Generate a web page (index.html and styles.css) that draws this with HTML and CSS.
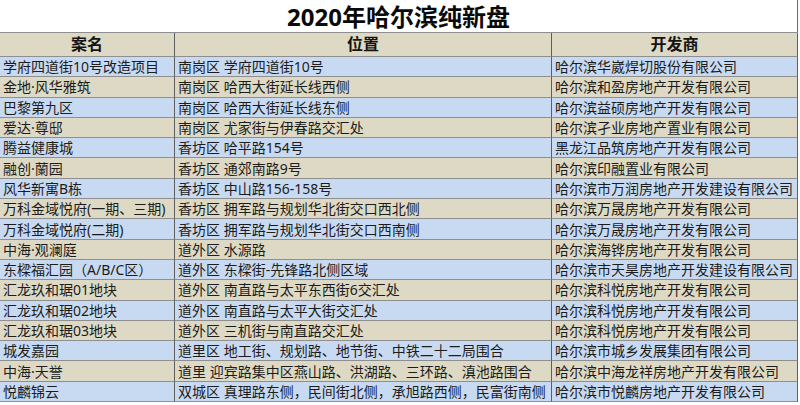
FILE: index.html
```html
<!DOCTYPE html>
<html lang="zh-CN">
<head>
<meta charset="utf-8">
<title>2020年哈尔滨纯新盘</title>
<link rel="stylesheet" href="styles.css">
</head>
<body>
<div class="page">
  <h1 class="title">2020年哈尔滨纯新盘</h1>
  <div class="sheet">
    <div class="cell head">案名</div><div class="cell head">位置</div><div class="cell head">开发商</div>

    <div class="cell blue">学府四道街10号改造项目</div><div class="cell blue">南岗区 学府四道街10号</div><div class="cell blue">哈尔滨华崴焊切股份有限公司</div>
    <div class="cell tan">金地·风华雅筑</div><div class="cell tan">南岗区 哈西大街延长线西侧</div><div class="cell tan">哈尔滨和盈房地产开发有限公司</div>
    <div class="cell blue">巴黎第九区</div><div class="cell blue">南岗区 哈西大街延长线东侧</div><div class="cell blue">哈尔滨益硕房地产开发有限公司</div>
    <div class="cell tan">爱达·尊邸</div><div class="cell tan">南岗区 尤家街与伊春路交汇处</div><div class="cell tan">哈尔滨孑业房地产置业有限公司</div>
    <div class="cell blue">腾益健康城</div><div class="cell blue">香坊区 哈平路154号</div><div class="cell blue">黑龙江品筑房地产开发有限公司</div>
    <div class="cell tan">融创·蘭园</div><div class="cell tan">香坊区 通郊南路9号</div><div class="cell tan">哈尔滨印融置业有限公司</div>
    <div class="cell blue">风华新寓B栋</div><div class="cell blue">香坊区 中山路156-158号</div><div class="cell blue">哈尔滨市万润房地产开发建设有限公司</div>
    <div class="cell tan">万科金域悦府(一期、三期)</div><div class="cell tan">香坊区 拥军路与规划华北街交口西北侧</div><div class="cell tan">哈尔滨万晟房地产开发有限公司</div>
    <div class="cell blue">万科金域悦府(二期)</div><div class="cell blue">香坊区 拥军路与规划华北街交口西南侧</div><div class="cell blue">哈尔滨万晟房地产开发有限公司</div>
    <div class="cell tan">中海·观澜庭</div><div class="cell tan">道外区 水源路</div><div class="cell tan">哈尔滨海铧房地产开发有限公司</div>
    <div class="cell blue">东樑福汇园（A/B/C区）</div><div class="cell blue">道外区 东樑街-先锋路北侧区域</div><div class="cell blue">哈尔滨市天昊房地产开发建设有限公司</div>
    <div class="cell tan">汇龙玖和琚01地块</div><div class="cell tan">道外区 南直路与太平东西街6交汇处</div><div class="cell tan">哈尔滨科悦房地产开发有限公司</div>
    <div class="cell blue">汇龙玖和琚02地块</div><div class="cell blue">道外区 南直路与太平大街交汇处</div><div class="cell blue">哈尔滨科悦房地产开发有限公司</div>
    <div class="cell tan">汇龙玖和琚03地块</div><div class="cell tan">道外区 三机街与南直路交汇处</div><div class="cell tan">哈尔滨科悦房地产开发有限公司</div>
    <div class="cell blue">城发嘉园</div><div class="cell blue">道里区 地工街、规划路、地节街、中铁二十二局围合</div><div class="cell blue">哈尔滨市城乡发展集团有限公司</div>
    <div class="cell tan">中海·天誉</div><div class="cell tan">道里 迎宾路集中区燕山路、洪湖路、三环路、滇池路围合</div><div class="cell tan">哈尔滨中海龙祥房地产开发有限公司</div>
    <div class="cell blue">悦麟锦云</div><div class="cell blue">双城区 真理路东侧，民间街北侧，承旭路西侧，民富街南侧</div><div class="cell blue">哈尔滨市悦麟房地产开发有限公司</div>
  </div>
</div>
</body>
</html>
```

FILE: styles.css
```css
html, body {
  margin: 0;
  padding: 0;
  background: #ffffff;
}

.page {
  width: 800px;
  height: 405px;
  overflow: hidden;
  font-family: "Noto Sans", "Noto Sans CJK SC", sans-serif;
  color: #1c1c1c;
}

.title {
  margin: 0;
  width: 797px;
  height: 33px;
  display: flex;
  align-items: center;
  justify-content: center;
  font-size: 24px;
  line-height: 1;
  font-weight: 700;
  color: #0a0a0a;
  border-right: 1px solid #6a6a6a;
}

.sheet {
  display: grid;
  width: 798px;
  grid-template-columns: 175px 377px 246px;
  grid-template-rows: 24px repeat(17, 20.3px);
  border-top: 1px solid #8e8e8e;
  margin-top: -1px;
}

.cell {
  font-size: 14px;
  line-height: 19px;
  padding: 0 0 0 3px;
  white-space: nowrap;
  overflow: hidden;
  border-bottom: 1px solid #8f8f8f;
  border-right: 1px solid #5e5e5e;
  display: flex;
  align-items: center;
}

.head {
  background: #ddd9c4;
  font-size: 16px;
  font-weight: 700;
  justify-content: center;
  padding: 0;
  color: #141414;
}

.blue {
  background: #c8daf1;
}

.tan {
  background: #ddd9c4;
}
```
